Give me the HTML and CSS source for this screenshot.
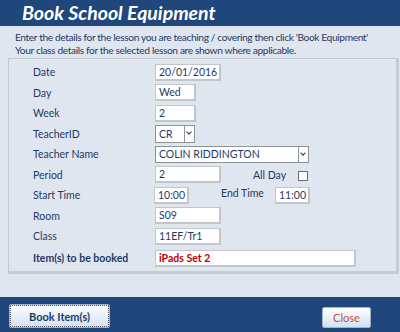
FILE: index.html
```html
<!DOCTYPE html>
<html lang="en">
<head>
    <meta charset="UTF-8">
    <title>Book School Equipment</title>
    <link rel="stylesheet" href="styles.css">
</head>
<body>
    <div class="header">
        <h1>Book School Equipment</h1>
    </div>
    <div class="intro">
        Enter the details for the lesson you are teaching / covering then click 'Book Equipment'<br>
        Your class details for the selected lesson are shown where applicable.
    </div>
    <div class="panel">
        <div class="row">
            <div class="label">Date</div>
            <div class="field w-date">20/01/2016</div>
        </div>
        <div class="row">
            <div class="label">Day</div>
            <div class="field w-day">Wed</div>
        </div>
        <div class="row">
            <div class="label">Week</div>
            <div class="field w-day">2</div>
        </div>
        <div class="row">
            <div class="label">TeacherID</div>
            <div class="combo w-id"><span>CR</span><span class="arrow"></span></div>
        </div>
        <div class="row">
            <div class="label">Teacher Name</div>
            <div class="combo w-name"><span>COLIN RIDDINGTON</span><span class="arrow"></span></div>
        </div>
        <div class="row">
            <div class="label">Period</div>
            <div class="field w-date">2</div>
            <div class="label-mid allday">All Day</div>
            <div class="checkbox"></div>
        </div>
        <div class="row">
            <div class="label">Start Time</div>
            <div class="field w-time">10:00</div>
            <div class="label-mid endtime">End Time</div>
            <div class="field w-time">11:00</div>
        </div>
        <div class="row">
            <div class="label">Room</div>
            <div class="field w-date">S09</div>
        </div>
        <div class="row">
            <div class="label">Class</div>
            <div class="field w-date">11EF/Tr1</div>
        </div>
        <div class="row row-items">
            <div class="label bold">Item(s) to be booked</div>
            <div class="field w-items items">iPads Set 2</div>
        </div>
    </div>
    <div class="footer">
        <button class="btn btn-book">Book Item(s)</button>
        <button class="btn btn-close">Close</button>
    </div>
</body>
</html>
```

FILE: styles.css
```css
body {
    margin: 0;
    width: 400px;
    height: 332px;
    background: #dfe6f0;
    font-family: Lato, "Open Sans", sans-serif;
    font-size: 10.5px;
    color: #1f3a66;
    position: relative;
    overflow: hidden;
}

.header {
    background: #1f477b;
    height: 26px;
}

.header h1 {
    margin: 0;
    padding-left: 22px;
    font-size: 19.5px;
    font-style: italic;
    font-weight: bold;
    color: white;
    line-height: 25px;
}

.intro {
    padding: 5px 0 0 15px;
    line-height: 13px;
    font-size: 10.2px;
    letter-spacing: -0.38px;
    white-space: nowrap;
}

.panel {
    margin: 1px 0 0 8px;
    width: 363px;
    height: 209px;
    border: 1px solid #c4c7cc;
    border-right: 3px solid #c8cbd0;
    border-bottom: 3px solid #c8cbd0;
    padding: 3px 0 0 24px;
}

.row {
    display: flex;
    align-items: center;
    height: 20.5px;
}

.label {
    width: 122px;
}

.bold {
    font-weight: bold;
}

.field {
    box-sizing: border-box;
    height: 17px;
    line-height: 15px;
    background: white;
    border: 1px solid #c2c5ca;
    border-right-width: 2px;
    border-bottom-width: 2px;
    padding-left: 3px;
    color: #1f3a66;
}

.w-date { width: 66px; }
.w-day { width: 41px; }
.w-time { width: 35px; margin-left: -1px; }
.w-items { width: 201px; }

.items {
    color: #c00000;
    font-weight: bold;
}

.row-items {
    margin-top: 1.5px;
}

.combo {
    box-sizing: border-box;
    height: 18px;
    background: white;
    border: 1px solid #8e939b;
    display: flex;
    align-items: center;
    padding-left: 3px;
}

.combo span:first-child {
    flex: 1;
}

.w-id { width: 40px; }
.w-name { width: 154px; height: 17px; }

.arrow {
    box-sizing: border-box;
    width: 10px;
    height: 100%;
    border-left: 1px solid #8e939b;
    position: relative;
}

.arrow::after {
    content: "";
    position: absolute;
    left: 2px;
    top: 4px;
    width: 3px;
    height: 3px;
    border-right: 1px solid #333;
    border-bottom: 1px solid #333;
    transform: rotate(45deg);
}

.allday {
    margin-left: 32px;
    width: 45px;
}

.endtime {
    margin-left: 32px;
    width: 55px;
    margin-top: -5px;
}

.checkbox {
    width: 8px;
    height: 8px;
    border: 1px solid #6b6f75;
    background: white;
    margin-top: 2px;
}

.footer {
    position: absolute;
    left: 0;
    right: 0;
    bottom: 0;
    height: 35px;
    background: #1f477b;
}

.btn {
    position: absolute;
    font-family: Lato, "Open Sans", sans-serif;
    font-size: 11px;
    font-weight: bold;
    border: 1px solid #9fb3cf;
    border-radius: 2px;
    background: linear-gradient(#ffffff, #d3e1f3);
}

.btn-book {
    left: 9px;
    top: 7px;
    width: 101px;
    height: 24px;
    color: #1f3a66;
    outline: 1px dotted #555;
    outline-offset: -2px;
}

.btn-close {
    left: 322px;
    top: 10px;
    width: 49px;
    height: 21px;
    color: #c0504d;
    font-weight: normal;
}
```
